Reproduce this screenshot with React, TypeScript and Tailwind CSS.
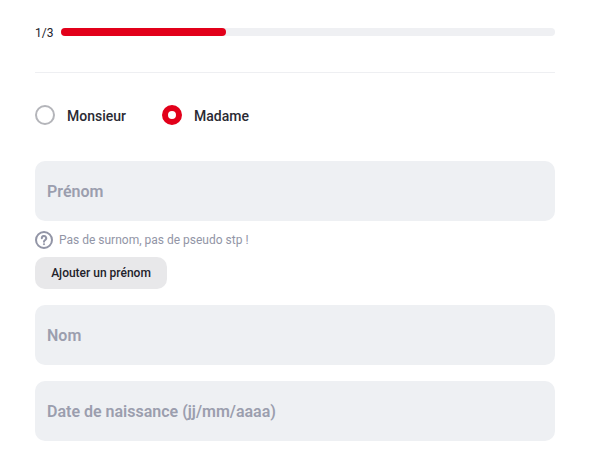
export default function App() {
  return (
    <div className="w-[594px] h-[460px] overflow-hidden bg-white pl-[35px] pr-[39px] pt-[22px] font-['Roboto',sans-serif]">
      <div className="flex items-center h-[20px] gap-[7px]">
        <span className="text-[12px] w-[19px] leading-none text-[#22222a] pt-[2px]">1/3</span>
        <div className="flex-1 h-[8px] rounded-full bg-[#eff0f3]">
          <div className="w-[165px] h-[8px] rounded-full bg-[#e2001a]" />
        </div>
      </div>
      <div className="mt-[30px] h-px bg-[#eeeff2]" />
      <div className="mt-[32px] flex items-center h-[20px]">
        <div className="flex items-center gap-[12px] w-[127px]">
          <span className="w-[20px] h-[20px] rounded-full border-2 border-[#b4b5ba] bg-white" />
          <span className="text-[14px] font-medium text-[#2a2a33] pt-[2px]">Monsieur</span>
        </div>
        <div className="flex items-center gap-[12px]">
          <span className="w-[20px] h-[20px] rounded-full border-[6px] border-[#e2001a] bg-white" />
          <span className="text-[14px] font-medium text-[#2a2a33] pt-[2px]">Madame</span>
        </div>
      </div>
      <div className="mt-[36px] h-[60px] rounded-[10px] bg-[#eef0f3] flex items-center px-[12px] pt-px text-[16px] font-semibold text-[#9b9eae]">Prénom</div>
      <div className="mt-[9px] flex items-center gap-[6px] h-[20px]">
        <svg width="18" height="18" viewBox="0 0 18 18" fill="none" stroke="#9295a6" strokeWidth="2">
          <circle cx="9" cy="9" r="8" />
          <path d="M6.8 7.2a2.2 2.2 0 1 1 3.3 1.9c-.7.4-1.1.8-1.1 1.6" strokeLinecap="round" />
          <circle cx="9" cy="13.2" r="0.6" fill="#9295a6" strokeWidth="1" />
        </svg>
        <span className="text-[12px] text-[#9295a6]">Pas de surnom, pas de pseudo stp !</span>
      </div>
      <div className="mt-[7px] w-[132px] h-[32px] rounded-[10px] bg-[#e8e8ea] flex items-center justify-center text-[12px] font-medium text-[#22222a]">Ajouter un prénom</div>
      <div className="mt-[16px] h-[60px] rounded-[10px] bg-[#eef0f3] flex items-center px-[12px] pt-px text-[16px] font-semibold text-[#9b9eae]">Nom</div>
      <div className="mt-[16px] h-[60px] rounded-[10px] bg-[#eef0f3] flex items-center px-[12px] pt-px text-[16px] font-semibold text-[#9b9eae]">Date de naissance (jj/mm/aaaa)</div>
    </div>
  );
}
